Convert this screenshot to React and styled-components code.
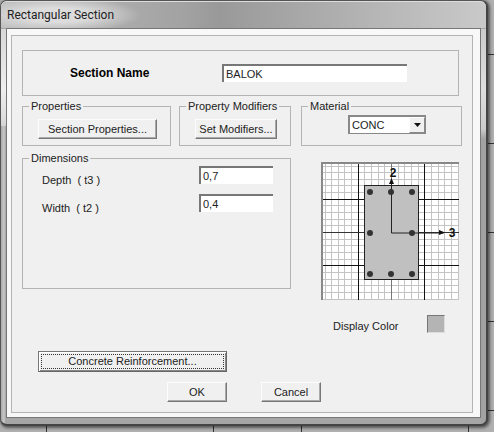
import React, {useState} from 'react';
import styled, {createGlobalStyle} from 'styled-components';

const GlobalStyle = createGlobalStyle`
    * {
        box-sizing: border-box;
    }

    body {
        margin: 0;
        background: white;
        color: #222;
        font-family: "Liberation Sans", Arial, sans-serif;
        font-size: 11px;
        line-height: 14px;
    }

    button, input, select {
        font: inherit;
        color: inherit;
    }
`

// drawing area behind the dialog, with its grid lines
const Desktop = styled.main`
    margin: 0 2px 2px 0;
    padding: 0 6px 6px 0;
    background:
        linear-gradient(#333, #333) 46px 0 / 1px 100% no-repeat,
        linear-gradient(#333, #333) 213px 0 / 1px 100% no-repeat,
        linear-gradient(#333, #333) 301px 0 / 1px 100% no-repeat,
        linear-gradient(#333, #333) 468px 0 / 1px 100% no-repeat,
        linear-gradient(#333, #333) 0 54px / 100% 1px no-repeat,
        linear-gradient(#333, #333) 0 143px / 100% 1px no-repeat,
        linear-gradient(#333, #333) 0 232px / 100% 1px no-repeat,
        linear-gradient(#333, #333) 0 321px / 100% 1px no-repeat,
        linear-gradient(#333, #333) 0 410px / 100% 1px no-repeat,
        #b0b0b0;
`

const Window = styled.form`
    padding: 0 5px 6px;
    border: 1px solid #555;
    border-right: 2px solid #444;
    border-bottom: 2px solid #444;
    border-radius: 7px;
    background:
        linear-gradient(to right, #a8a8a8, #c8c8c8 3px, #a0a0a0 5px) 0 125px / 5px 100% no-repeat,
        linear-gradient(#d8d8d8, #eee 60px, #ddd 90px, #aaa 125px) 0 28px / 5px 98px no-repeat,
        linear-gradient(#ccc, #ddd 60px, #ccc 100px, #a2a2a2 110px) right 28px / 5px 100% no-repeat,
        #a6a6a6;
    box-shadow: 1px 1px 3px 1px rgba(0, 0, 0, 0.5);
`

const TitleBar = styled.header`
    height: 27px;
    margin: 0 -5px;
    padding: 4px 6px;
    border-top: 1px solid #ddd;
    border-radius: 6px 6px 0 0;
    background:
        radial-gradient(ellipse 85px 18px at 55px 13px, #dcdcdc 40%, transparent),
        linear-gradient(to right, #bbb, #a2a2a2 38%, #999 45%, #a8a8a8 62%, #b8b8b8 80%, #c9c9c9);
`

const Title = styled.h1`
    margin: 0;
    font-family: Roboto, sans-serif;
    font-size: 12px;
    font-weight: 400;
    line-height: 18px;
`

const Client = styled.div`
    padding: 6px 7px 4px 4px;
    border: 1px solid #777;
    background: #f8f8f8;
`

const Panel = styled.div`
    padding: 14px 10px 10px;
    border: 1px solid #b4b4b4;
    background: #f0f0f0;
`

const NameBox = styled.div`
    display: grid;
    grid-template-columns: 152px 1fr;
    align-items: center;
    height: 46px;
    margin: 0 3px 3px 0;
    padding: 0 51px 0 47px;
    border: 1px solid #b4b4b4;
`

const NameLabel = styled.label`
    color: black;
    font-size: 12px;
    font-weight: 700;
`

const TextBox = styled.input`
    width: 100%;
    height: 18px;
    padding: 0 2px;
    border: 0 solid #777;
    border-width: 2px 0 0 2px;
    outline: 0;
    background: white;
`

const Columns = styled.div`
    display: grid;
    grid-template-columns: 1fr 161px;
    gap: 10px;
`

const Column = styled.div`
    display: flex;
    flex-direction: column;
    gap: 5px;
`

const GroupRow = styled.div`
    display: grid;
    grid-template-columns: 1fr 112px;
    gap: 8px;
`

const Group = styled.fieldset`
    min-width: 0;
    height: ${props => props.$tall ? '138px' : '47px'};
    margin: 0;
    padding: ${props => props.$tall ? '1px 17px 0 19px' : '6px 13px 0 15px'};
    border: 1px solid #b4b4b4;
`

const Legend = styled.legend`
    margin-left: ${props => props.$tall ? '-13px' : '-9px'};
    padding: 0 2px;
    white-space: nowrap;
`

const Button = styled.button`
    width: ${props => props.$width || '100%'};
    height: 20px;
    padding: 0;
    border: 1px solid;
    border-color: #fcfcfc #777 #777 #fcfcfc;
    background: #f0f0f0;
    box-shadow: inset -1px -1px #aaa;
    white-space: nowrap;
`

const DefaultButton = styled(Button)`
    height: 21px;
    padding: 2px;
    border-color: #777 #666 #666 #777;
    box-shadow: inset 1px 1px #fff, inset -1px -1px #888;
`

const FocusRing = styled.span`
    display: block;
    border: 1px dotted #333;
    line-height: 13px;
`

const Field = styled.div`
    display: grid;
    grid-template-columns: 1fr 74px;
    height: 28px;
`

const FieldLabel = styled.label`
    padding-top: 7px;
    white-space: pre;
`

const SelectBox = styled.div`
    display: grid;
    width: 78px;
    height: 19px;
    margin: -4px 0 0 31px;
    border: 1px solid #888;
    border-width: 2px 1px 1px 2px;
    background: white;
`

const Select = styled.select`
    grid-area: 1 / 1;
    min-width: 0;
    padding: 0 2px;
    border: 0;
    outline: 0;
    appearance: none;
    background: transparent;
`

const Arrow = styled.span`
    grid-area: 1 / 1;
    justify-self: end;
    display: grid;
    place-items: center;
    width: 16px;
    border: 1px solid;
    border-color: #fff #888 #888 #fff;
    background: #f0f0f0;
    pointer-events: none;
`

const Preview = styled.div`
    width: 138px;
    height: 138px;
    margin: 16px 0 15px 20px;
    border: 0 solid #888;
    border-width: 2px 0 0 2px;
    background: white;

    svg {
        display: block;
    }
`

const ColorRow = styled.div`
    display: flex;
    justify-content: space-between;
    align-items: flex-end;
    padding: 0 17px 0 32px;
`

const Swatch = styled.button`
    width: 18px;
    height: 18px;
    padding: 0;
    border: 1px solid;
    border-color: #777 #ddd #ddd #777;
    background: #b4b4b4;
`

const Actions = styled.div`
    display: flex;
    flex-direction: column;
    gap: 10px;
    margin-top: 18px;
    padding-left: 16px;
`

const ActionRow = styled.div`
    display: flex;
    gap: 34px;
    padding-left: 129px;
`

const BARS = [
    [47, 28], [68, 28], [89, 28],
    [47, 69], [89, 69],
    [47, 110], [68, 110], [89, 110],
];

const GRID_STEP = 6.65;

function SectionPreview() {
    const lines = Array.from({length: 21}, (_, i) => 68.5 + Math.round((i - 10) * GRID_STEP));

    return (
        <Preview>
            <svg width="136" height="136" viewBox="0 0 136 136" role="img" aria-label="Section preview">
                <g stroke="#c4c4c4">
                    {lines.map(p => <path key={p} d={`M${p} 0v136M0 ${p}h136`} />)}
                </g>
                <path d="M35.5 0v136M101.5 0v136M0 35.5h136M0 101.5h136" stroke="#111" />
                <path d="M68.5 0v136" stroke="#777" />
                <path d="M0 68.5h136" stroke="#333" />
                <rect x="41.5" y="21.5" width="54" height="94" fill="#c0c0c0" stroke="#222" />
                <path d="M68.5 17v52h52" fill="none" stroke="#222" />
                <path d="M68.5 14l2.5 6h-5zM122 68.5l-6-2.5v5z" fill="#111" />
                {BARS.map(([x, y]) => <circle key={`${x}-${y}`} cx={x} cy={y} r="3" fill="#333" />)}
                <g fill="#111" fontSize="12" fontWeight="700" textAnchor="middle">
                    <text x="70" y="13">2</text>
                    <text x="129" y="73">3</text>
                </g>
            </svg>
        </Preview>
    );
}

function App() {
    const [values, setValues] = useState({name: 'BALOK', depth: '0,7', width: '0,4'});

    const change = (e) => {
        const {name, value} = e.target;
        setValues(old => ({...old, [name]: value}));
    }

    return (
        <Desktop>
            <GlobalStyle />
            <Window onSubmit={e => e.preventDefault()}>
                <TitleBar>
                    <Title>Rectangular Section</Title>
                </TitleBar>
                <Client>
                    <Panel>
                        <NameBox>
                            <NameLabel htmlFor="name">Section Name</NameLabel>
                            <TextBox id="name" name="name" value={values.name} onChange={change} />
                        </NameBox>
                        <Columns>
                            <Column>
                                <GroupRow>
                                    <Group>
                                        <Legend>Properties</Legend>
                                        <Button type="button">Section Properties...</Button>
                                    </Group>
                                    <Group>
                                        <Legend>Property Modifiers</Legend>
                                        <Button type="button">Set Modifiers...</Button>
                                    </Group>
                                </GroupRow>
                                <Group $tall>
                                    <Legend $tall>Dimensions</Legend>
                                    <Field>
                                        <FieldLabel htmlFor="depth">Depth  ( t3 )</FieldLabel>
                                        <TextBox id="depth" name="depth" value={values.depth} onChange={change} />
                                    </Field>
                                    <Field>
                                        <FieldLabel htmlFor="width">Width  ( t2 )</FieldLabel>
                                        <TextBox id="width" name="width" value={values.width} onChange={change} />
                                    </Field>
                                </Group>
                            </Column>
                            <div>
                                <Group>
                                    <Legend>Material</Legend>
                                    <SelectBox>
                                        <Select aria-label="Material" defaultValue="CONC">
                                            <option>CONC</option>
                                        </Select>
                                        <Arrow>
                                            <svg width="7" height="4" viewBox="0 0 7 4">
                                                <path d="M0 0h7L3.5 4z" fill="#111" />
                                            </svg>
                                        </Arrow>
                                    </SelectBox>
                                </Group>
                                <SectionPreview />
                                <ColorRow>
                                    <span id="color-label">Display Color</span>
                                    <Swatch type="button" aria-labelledby="color-label" />
                                </ColorRow>
                            </div>
                        </Columns>
                        <Actions>
                            <DefaultButton type="button" $width="189px">
                                <FocusRing>Concrete Reinforcement...</FocusRing>
                            </DefaultButton>
                            <ActionRow>
                                <Button type="submit" $width="60px">OK</Button>
                                <Button type="button" $width="60px">Cancel</Button>
                            </ActionRow>
                        </Actions>
                    </Panel>
                </Client>
            </Window>
        </Desktop>
    );
}

export default App;
